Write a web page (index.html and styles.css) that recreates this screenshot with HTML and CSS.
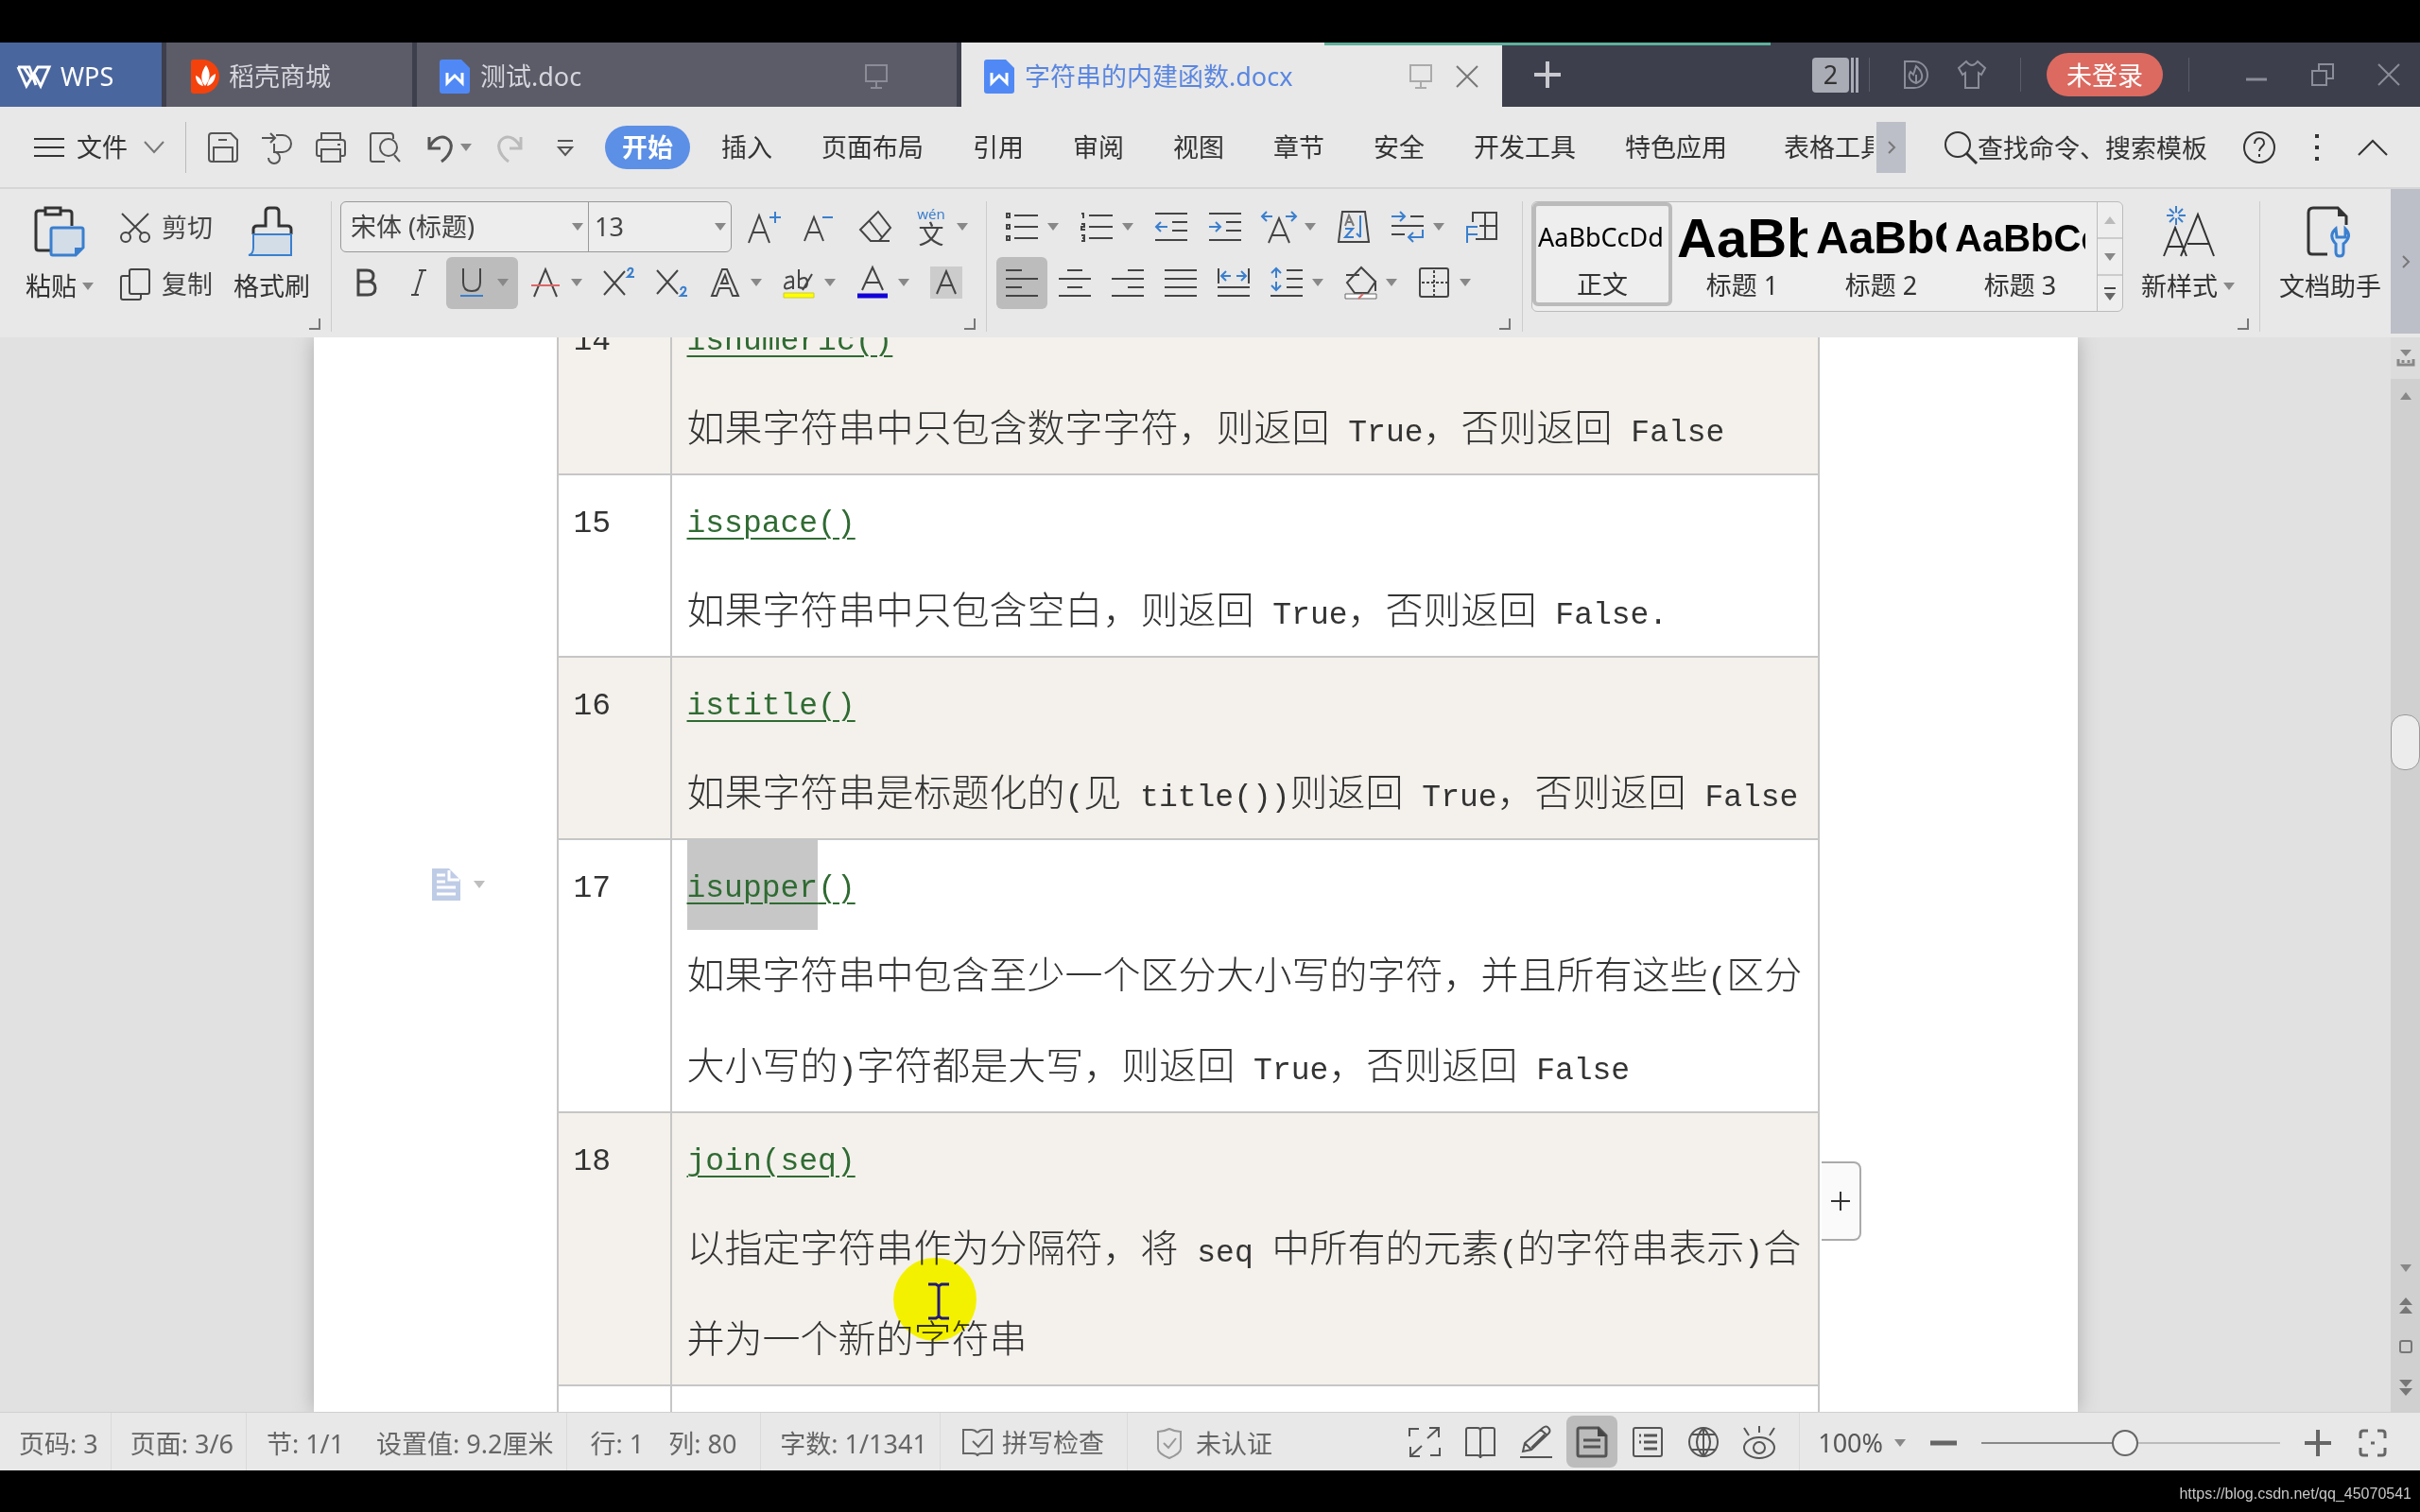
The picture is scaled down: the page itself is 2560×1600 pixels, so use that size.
FILE: index.html
```html
<!DOCTYPE html>
<html lang="zh-CN">
<head>
<meta charset="utf-8">
<title>字符串的内建函数.docx</title>
<link rel="stylesheet" href="styles.css">
</head>
<body>
<svg class="sprite" width="0" height="0" aria-hidden="true">
  <symbol id="caret" viewBox="0 0 12 8"><path d="M0 0h12L6 8z" fill="#888" stroke="none"/></symbol>
  <symbol id="monitor" viewBox="0 0 26 28"><path d="M2 2h22v17H2zM13 19v6M7 26h12"/></symbol>
  <symbol id="close" viewBox="0 0 26 26"><path d="M2 2l22 22M24 2L2 24"/></symbol>
  <symbol id="wdoc" viewBox="0 0 32 36"><path d="M3 0h20l9 9v24q0 3-3 3H3q-3 0-3-3V3q0-3 3-3z" fill="#5089f5" stroke="none"/><path d="M8 14v11l8-8 8 8V14" stroke="#fff" stroke-width="3"/></symbol>
  <symbol id="launcher" viewBox="0 0 12 12"><path d="M11 0v11H0" stroke="#777"/></symbol>
</svg>

<div class="app">
<header class="tabbar">
  <div class="accent"></div>
  <button class="tab home"><svg class="logo" viewBox="0 0 36 24"><path d="M1 2h12l7 19M1 2l9 20 12-20h12l-9 20-7-13M7 2l8 12" stroke-width="3"/></svg>WPS</button>
  <button class="tab shop"><svg class="i32" viewBox="0 0 32 36"><path d="M3 0h9a18 18 0 010 36H3q-3 0-3-3V3q0-3 3-3z" fill="#f4420c" stroke="none"/><path d="M15 28C9 22 11 12 16 6c5 7 5 15-1 22zM13 28c-5-1-8-5-8-11 5 2 7 6 8 11zM17 28c5-1 9-6 9-13-6 3-8 8-9 13z" fill="#fff" stroke="none"/></svg>稻壳商城</button>
  <button class="tab other"><svg class="i32"><use href="#wdoc"/></svg><span>测试.doc</span><svg class="mon"><use href="#monitor"/></svg></button>
  <button class="tab active"><svg class="i32"><use href="#wdoc"/></svg><span>字符串的内建函数.docx</span><svg class="mon"><use href="#monitor"/></svg><svg class="x"><use href="#close"/></svg></button>
  <button class="add" aria-label="新建"><svg viewBox="0 0 28 28"><path d="M14 0v28M0 14h28" stroke-width="4"/></svg></button>
  <div class="wintools">
    <span class="count"><b>2</b></span><i class="vs"></i>
    <button aria-label="稻壳"><svg width="30" height="32" viewBox="0 0 30 32"><path d="M2 2h10a14 14 0 010 28H2zM14 25c-9-3-8-9-6-12l3 3 3-9c5 4 11 14 0 18zM14 25v-9"/></svg></button>
    <button aria-label="皮肤"><svg width="32" height="32" viewBox="0 0 32 32"><path d="M10 2q6 8 12 0l8 7-4 7-3-2v16H9V14l-3 2-4-7z"/></svg></button>
    <i class="vs"></i>
    <button class="login">未登录</button>
    <i class="vs"></i>
    <button aria-label="最小化"><svg width="24" height="26" viewBox="0 0 24 26"><path d="M0 18h22" stroke-width="3"/></svg></button>
    <button aria-label="还原"><svg width="26" height="26" viewBox="0 0 26 26"><path d="M2 9h15v15H2zM9 9V2h15v15h-7"/></svg></button>
    <button aria-label="关闭"><svg width="26" height="26"><use href="#close"/></svg></button>
  </div>
</header>

<nav class="menubar">
  <button class="file"><svg width="32" height="24" viewBox="0 0 32 24"><path d="M0 3h32M0 12h32M0 21h32"/></svg>文件<svg width="22" height="14" viewBox="0 0 22 14"><path d="M1 1l10 11L21 1" stroke="#777"/></svg></button>
  <i class="vs"></i>
  <div class="quick">
    <button aria-label="保存"><svg class="ic" viewBox="0 0 34 34"><path d="M2 5q0-3 3-3h20l7 7v20q0 3-3 3H5q-3 0-3-3zM7 32V17h20v15M12 9h9"/></svg></button>
    <button aria-label="输出"><svg class="ic" viewBox="0 0 34 34"><path d="M1 7h14M10 2l5 5-5 5M16 4h7a9 9 0 010 18h-9V13M14 22a6 6 0 11-6 6"/></svg></button>
    <button aria-label="打印"><svg class="ic" viewBox="0 0 34 34"><path d="M7 9V2h20v7M7 26H4q-2 0-2-2V12q0-3 3-3h24q3 0 3 3v12q0 2-2 2h-3M7 19h20v13H7zM24 14h3"/></svg></button>
    <button aria-label="打印预览"><svg class="ic" viewBox="0 0 34 34"><path d="M17 32H4q-2 0-2-2V4q0-2 2-2h19q3 0 3 3v3M27 25l6 7"/><circle cx="21" cy="17" r="9"/></svg></button>
    <button class="drop" aria-label="撤销"><svg class="ic" viewBox="0 0 34 34"><path d="M5 6v12h12M5 18C9 8 17 4 23 7c9 5 6 17-5 25" stroke-width="3"/></svg><svg class="caret"><use href="#caret"/></svg></button>
    <button class="dim" aria-label="恢复"><svg class="ic" viewBox="0 0 34 34"><path d="M29 6v12H17M29 18C25 8 17 4 11 7c-9 5-6 17 5 25" stroke-width="3"/></svg></button>
    <button aria-label="自定义"><svg width="20" height="22" viewBox="0 0 20 22"><path d="M2 4h16M3 11h14l-7 8z"/></svg></button>
  </div>
  <div class="menus">
    <button class="on">开始</button><button>插入</button><button>页面布局</button><button>引用</button><button>审阅</button><button>视图</button><button>章节</button><button>安全</button><button>开发工具</button><button>特色应用</button><button class="cut">表格工具</button>
  </div>
  <button class="more" aria-label="更多选项卡"><svg width="8" height="14" viewBox="0 0 8 14"><path d="M1 1l6 6-6 6"/></svg></button>
  <label class="search"><svg width="36" height="36" viewBox="0 0 36 36"><circle cx="15" cy="15" r="13"/><path d="M24 24l11 11" stroke-width="3"/></svg><input type="text" placeholder="查找命令、搜索模板" aria-label="查找命令、搜索模板"></label>
  <div class="help">
    <button aria-label="帮助"><svg width="36" height="36" viewBox="0 0 36 36"><circle cx="18" cy="18" r="16"/><path d="M13 14c0-8 11-7 10 0-1 4-5 4-5 8M18 25v3"/></svg></button>
    <button aria-label="菜单"><svg width="6" height="30" viewBox="0 0 6 30"><path d="M1 3h4M1 15h4M1 27h4" stroke-width="4"/></svg></button>
    <button aria-label="折叠"><svg width="32" height="18" viewBox="0 0 32 18"><path d="M1 17L16 2l15 15"/></svg></button>
  </div>
</nav>

<section class="ribbon">
  <div class="group clip">
    <button class="big"><svg width="54" height="54" viewBox="0 0 54 54"><path d="M12 5H5q-3 0-3 3v36q0 3 3 3h14M28 5h9q3 0 3 3v13" stroke="#333" stroke-width="3"/><path d="M12 2h16v7H12z" stroke="#333" stroke-width="3"/><path d="M20 23h30q2 0 2 2v19l-8 8H20q-2 0-2-2V25q0-2 2-2z" fill="#d3dde8" stroke="#3a7fce" stroke-width="3"/><path d="M43 52v-8h9z" fill="#3a7fce" stroke="none"/></svg><span>粘贴<svg class="caret"><use href="#caret"/></svg></span></button>
    <div class="pair">
      <button><svg class="ic" viewBox="0 0 34 34"><circle cx="7" cy="27" r="5"/><circle cx="27" cy="27" r="5"/><path d="M3 2l21 21M31 2L10 23"/></svg>剪切</button>
      <button><svg class="ic" viewBox="0 0 34 34"><path d="M13 1h17q2 0 2 2v22q0 2-2 2H13q-2 0-2-2V3q0-2 2-2zM11 8H4q-2 0-2 2v21q0 2 2 2h17q2 0 2-2v-4"/></svg>复制</button>
    </div>
    <button class="big"><svg width="50" height="54" viewBox="0 0 50 54"><path d="M5 30V25q0-4 4-4h9V6q0-4 4-4h6q4 0 4 4v15h9q4 0 4 4v5" stroke="#333" stroke-width="3"/><path d="M5 30h40v22H0q5-1 5-8z" fill="#d3dde8" stroke="#3a7fce"/></svg><span>格式刷</span></button>
    <svg class="launcher"><use href="#launcher"/></svg>
  </div>

  <div class="group font">
    <div class="row">
      <div class="fontbox">
        <label class="face"><select aria-label="字体"><option>宋体 (标题)</option></select><svg class="caret"><use href="#caret"/></svg></label>
        <label class="size"><select aria-label="字号"><option>13</option></select><svg class="caret"><use href="#caret"/></svg></label>
      </div>
      <button aria-label="增大字号"><svg class="ic" viewBox="0 0 34 34"><path d="M1 34L12 5l11 29M5 23h14"/><path d="M23 7h12M29 1v12" stroke="#3a7fce"/></svg></button>
      <button aria-label="减小字号"><svg class="ic" viewBox="0 0 34 34"><path d="M1 32L11 7l10 25M5 23h13"/><path d="M20 7h11" stroke="#3a7fce"/></svg></button>
      <button aria-label="清除格式"><svg class="ic" viewBox="0 0 34 34"><path d="M20 1l13 17-12 14h-9L1 20zM10 10l14 18M12 32h20"/></svg></button>
      <button class="drop" aria-label="拼音指南"><span class="pinyin"><small>wén</small>文</span><svg class="caret"><use href="#caret"/></svg></button>
    </div>
    <div class="row b">
      <button aria-label="加粗"><svg class="ic" viewBox="0 0 34 34"><path d="M9 4h9q7 0 7 6t-7 6H9zM9 16h10q8 0 8 7t-8 7H9z" stroke-width="3"/></svg></button>
      <button aria-label="倾斜"><svg class="ic" viewBox="0 0 34 34"><path d="M17 4h8M9 30h8M21 4l-8 26"/></svg></button>
      <button class="drop pressed" aria-label="下划线"><svg class="ic" viewBox="0 0 34 34"><path d="M8 2v15q0 9 9 9t9-9V2"/><path d="M5 31h24" stroke="#3a7fce"/></svg><svg class="caret"><use href="#caret"/></svg></button>
      <button class="drop" aria-label="删除线"><svg class="ic" viewBox="0 0 34 34"><path d="M5 32L17 3l12 29"/><path d="M2 20h30" stroke="#d66"/></svg><svg class="caret"><use href="#caret"/></svg></button>
      <button aria-label="上标"><svg class="ic" viewBox="0 0 34 34"><path d="M1 5l22 25M23 5L1 30"/><path d="M26 5q1-4 4-3 4 2-4 9h7" stroke="#3a7fce"/></svg></button>
      <button aria-label="下标"><svg class="ic" viewBox="0 0 34 34"><path d="M1 4l22 25M23 4L1 29"/><path d="M26 25q1-4 4-3 4 2-4 9h7" stroke="#3a7fce"/></svg></button>
      <button class="drop" aria-label="文字效果"><svg class="ic" viewBox="0 0 34 34"><path d="M3 31L14 3h5l12 28h-6l-3-8H11l-3 8zM13 18h7l-3-9z"/></svg><svg class="caret"><use href="#caret"/></svg></button>
      <button class="drop" aria-label="突出显示"><svg class="ic" viewBox="0 0 34 34"><path d="M3 12q8-4 8 2v10M11 16q-9 0-9 5t9 0M17 3v20M17 14q9-5 9 3t-9 5M31 8L21 25"/><path d="M1 28h32v5H1z" fill="#ff0" stroke="#cc3" stroke-width="1"/></svg><svg class="caret"><use href="#caret"/></svg></button>
      <button class="drop" aria-label="字体颜色"><svg class="ic" viewBox="0 0 34 34"><path d="M6 25L17 1l11 24M10 17h14"/><path d="M1 31h32" stroke="#1200d8" stroke-width="5"/></svg><svg class="caret"><use href="#caret"/></svg></button>
      <button aria-label="字符底纹"><svg class="ic" viewBox="0 0 34 34"><path d="M0 0h34v34H0z" fill="#ccc" stroke="none"/><path d="M7 29L17 5l10 24M11 20h12"/></svg></button>
    </div>
    <svg class="launcher"><use href="#launcher"/></svg>
  </div>

  <div class="group para">
    <div class="row">
      <button class="drop" aria-label="项目符号"><svg class="ic" viewBox="0 0 34 34"><path d="M9 5h25M9 17h25M9 29h25"/><path d="M1 3h3v4H1zM1 15h3v4H1zM1 27h3v4H1z"/></svg><svg class="caret"><use href="#caret"/></svg></button>
      <button class="drop" aria-label="编号"><svg class="ic" viewBox="0 0 34 34"><path d="M9 5h25M9 17h25M9 29h25M3 2v6M1 3h2M1 14h3v3H1v3h4M1 26h3v6H1M2 29h2"/></svg><svg class="caret"><use href="#caret"/></svg></button>
      <button aria-label="减少缩进"><svg class="ic" viewBox="0 0 34 34"><path d="M0 3h34M18 12h16M18 21h16M0 31h34"/><path d="M1 17h12M6 12l-5 5 5 5" stroke="#3a7fce"/></svg></button>
      <button aria-label="增加缩进"><svg class="ic" viewBox="0 0 34 34"><path d="M0 3h34M18 12h16M18 21h16M0 31h34"/><path d="M0 17h12M7 12l5 5-5 5" stroke="#3a7fce"/></svg></button>
      <button class="drop" aria-label="字符缩放"><svg class="ic" viewBox="0 0 34 34"><path d="M6 34L17 8l11 26M10 26h14"/><path d="M-1 6h11M4 1L-1 6l5 5M24 6h11M30 1l5 5-5 5" stroke="#3a7fce"/></svg><svg class="caret"><use href="#caret"/></svg></button>
      <button aria-label="排序"><svg class="ic" viewBox="0 0 34 34"><path d="M5 1h24l4 32H1z"/><path d="M8 16l4-11 5 11M10 12h6" stroke="#777"/><path d="M8 19h8l-8 9h9M24 5v23M20 24l4 4" stroke="#3a7fce"/></svg></button>
      <button class="drop" aria-label="换行"><svg class="ic" viewBox="0 0 34 34"><path d="M20 6h14M0 16h34M0 25h14"/><path d="M0 6h14M9 1l5 5-5 5M33 20v8H18M23 23l-5 5 5 5" stroke="#3a7fce"/></svg><svg class="caret"><use href="#caret"/></svg></button>
      <button aria-label="制表位"><svg class="ic" viewBox="0 0 34 34"><path d="M7 12V2h25v28H10M20 2v28M14 16h18"/><path d="M1 34V17h11M1 25h11" stroke="#3a7fce"/></svg></button>
    </div>
    <div class="row b">
      <button class="pressed" aria-label="左对齐"><svg class="ic" viewBox="0 0 34 34"><path d="M0 4h17M0 13h34M0 22h17M0 31h34"/></svg></button>
      <button aria-label="居中"><svg class="ic" viewBox="0 0 34 34"><path d="M9 4h16M0 13h34M9 22h16M0 31h34"/></svg></button>
      <button aria-label="右对齐"><svg class="ic" viewBox="0 0 34 34"><path d="M17 4h17M0 13h34M17 22h17M0 31h34"/></svg></button>
      <button aria-label="两端对齐"><svg class="ic" viewBox="0 0 34 34"><path d="M0 4h34M0 13h34M0 22h34M0 31h34"/></svg></button>
      <button aria-label="分散对齐"><svg class="ic" viewBox="0 0 34 34"><path d="M1 2v16M33 2v16M0 22h34M0 31h34"/><path d="M4 10h10M9 5l-5 5 5 5M20 10h10M25 5l5 5-5 5" stroke="#3a7fce"/></svg></button>
      <button class="drop" aria-label="行距"><svg class="ic" viewBox="0 0 34 34"><path d="M17 4h17M17 13h17M17 22h17M0 31h34"/><path d="M6 2v10M1 7l5-5 5 5M6 16v9M1 20l5 5 5-5" stroke="#3a7fce"/></svg><svg class="caret"><use href="#caret"/></svg></button>
      <button class="drop" aria-label="底纹颜色"><svg class="ic" viewBox="0 0 34 34"><path d="M2 9h14M18 1L3 17l8 11h14l8-12zM33 15v11"/><path d="M1 29h33v5H1z" fill="#fff" stroke="#666" stroke-width="1"/><path d="M15 34l5-5" stroke="#d66"/></svg><svg class="caret"><use href="#caret"/></svg></button>
      <button class="drop" aria-label="边框"><svg class="ic" viewBox="0 0 34 34"><path d="M4 2h26q2 0 2 2v26q0 2-2 2H4q-2 0-2-2V4q0-2 2-2z"/><path d="M17 4v28M4 17h28" stroke-dasharray="3 2"/></svg><svg class="caret"><use href="#caret"/></svg></button>
    </div>
    <svg class="launcher"><use href="#launcher"/></svg>
  </div>

  <div class="group styles">
    <div class="gallery">
      <button class="style picked"><span class="s0">AaBbCcDd</span>正文</button>
      <button class="style"><span class="s1">AaBb</span>标题 1</button>
      <button class="style"><span class="s2">AaBbC</span>标题 2</button>
      <button class="style"><span class="s3">AaBbCc</span>标题 3</button>
      <div class="updown">
        <button aria-label="上一行"><svg class="caret flip"><use href="#caret"/></svg></button>
        <button aria-label="下一行"><svg class="caret"><use href="#caret"/></svg></button>
        <button aria-label="全部样式"><svg width="12" height="14" viewBox="0 0 12 14"><path d="M0 1h12"/><path d="M0 6h12l-6 8z" fill="#666" stroke="none"/></svg></button>
      </div>
    </div>
    <button class="big"><svg width="56" height="54" viewBox="0 0 56 54"><path d="M2 53l12-30 12 30M6 43h16M20 53L38 9l17 44M27 40h23"/><path d="M15 0v20M5 10h20M8 3l14 14M22 3L8 17" stroke="#3a7fce"/><circle cx="15" cy="10" r="3" fill="#e8e8e8" stroke="none"/></svg><span>新样式<svg class="caret"><use href="#caret"/></svg></span></button>
    <svg class="launcher"><use href="#launcher"/></svg>
  </div>

  <div class="group tools">
    <button class="big"><svg width="50" height="54" viewBox="0 0 50 54"><path d="M22 51H6q-4 0-4-4V7q0-5 5-5h26l9 9v9" stroke="#333" stroke-width="3"/><path d="M33 2v9h9z" fill="#333" stroke="none"/><path d="M31 24q-8 7-1 15l1 1v9q0 4 4 4t4-4v-9q10-8 2-16v9h-9z" fill="#d9e6f4" stroke="#3a7fce" stroke-width="3"/></svg><span>文档助手</span></button>
  </div>
  <button class="slide" aria-label="更多工具"><svg width="8" height="14" viewBox="0 0 8 14"><path d="M1 1l6 6-6 6"/></svg></button>
</section>

<main class="workspace">
  <div class="canvas">
    <article class="page">
      <table class="doc">
        <colgroup><col class="num"><col></colgroup>
        <tbody>
        <tr class="alt"><td>14</td><td><p class="fn"><a href="#isnumeric">isnumeric()</a></p><p>如果字符串中只包含数字字符，则返回<span class="latin"> True</span>，否则返回<span class="latin"> False</span></p></td></tr>
        <tr><td>15</td><td><p class="fn"><a href="#isspace">isspace()</a></p><p>如果字符串中只包含空白，则返回<span class="latin"> True</span>，否则返回<span class="latin"> False.</span></p></td></tr>
        <tr class="alt"><td>16</td><td><p class="fn"><a href="#istitle">istitle()</a></p><p>如果字符串是标题化的<span class="latin">(</span>见<span class="latin"> title())</span>则返回<span class="latin"> True</span>，否则返回<span class="latin"> False</span></p></td></tr>
        <tr><td>17</td><td><p class="fn"><a href="#isupper"><mark>isupper</mark>()</a></p><p>如果字符串中包含至少一个区分大小写的字符，并且所有这些<span class="latin">(</span>区分<br>大小写的<span class="latin">)</span>字符都是大写，则返回<span class="latin"> True</span>，否则返回<span class="latin"> False</span></p></td></tr>
        <tr class="alt"><td>18</td><td><p class="fn"><a href="#join">join(seq)</a></p><p>以指定字符串作为分隔符，将<span class="latin"> seq </span>中所有的元素<span class="latin">(</span>的字符串表示<span class="latin">)</span>合<br>并为一个新的字符串</p></td></tr>
        <tr class="last"><td></td><td></td></tr>
        </tbody>
      </table>
      <button class="parabtn" aria-label="段落布局"><svg width="30" height="34" viewBox="0 0 30 34"><path d="M0 0h18l12 12v22H0z" fill="#b9c7e4" stroke="none"/><path d="M5 7h9M5 14h9M5 20h20M5 27h20M18 2v10h11" stroke="#fff" stroke-width="3"/></svg><svg class="caret"><use href="#caret"/></svg></button>
      <button class="addrow" aria-label="添加列"><svg width="20" height="20" viewBox="0 0 20 20"><path d="M10 0v20M0 10h20"/></svg></button>
      <div class="spot"></div>
      <svg class="ibeam" width="22" height="40" viewBox="0 0 22 40"><path d="M0 2h8l3 2 3-2h8M11 4v32M0 38h8l3-2 3 2h8"/></svg>
    </article>
  </div>
  <aside class="vscroll">
    <button class="ruler" aria-label="标尺"><svg width="18" height="18" viewBox="0 0 18 18"><path d="M3 0h12L9 7z" fill="#888" stroke="none"/><path d="M1 10v6h16v-6M6 11v3M12 11v3" stroke="#888" stroke-width="3"/></svg></button>
    <button aria-label="向上"><svg class="caret flip"><use href="#caret"/></svg></button>
    <div class="track"><div class="thumb"></div></div>
    <div class="pager">
      <button aria-label="向下"><svg class="caret"><use href="#caret"/></svg></button>
      <button aria-label="上一页"><svg width="14" height="18" viewBox="0 0 14 18"><path d="M0 8h14L7 0zM0 17h14L7 9z" fill="#777" stroke="none"/></svg></button>
      <button aria-label="选择浏览对象"><svg width="14" height="14" viewBox="0 0 14 14"><rect x="1" y="1" width="12" height="12" rx="2" stroke="#777"/></svg></button>
      <button aria-label="下一页"><svg width="14" height="18" viewBox="0 0 14 18"><path d="M0 1h14L7 9zM0 10h14l-7 8z" fill="#777" stroke="none"/></svg></button>
    </div>
  </aside>
</main>

<footer class="status">
  <span class="cell">页码: 3</span><span class="cell">页面: 3/6</span>
  <span class="cell sect">节: 1/1<span>设置值: 9.2厘米</span></span>
  <span class="cell wide">行: 1<span>列: 80</span></span>
  <span class="cell">字数: 1/1341</span>
  <button class="cell spell"><svg class="ic" viewBox="0 0 34 34"><path d="M17 6q-3-3-6-3H2v25h10q5 0 5 3 0-3 5-3h10V3h-9q-3 0-6 3M12 15l6 6 10-12"/></svg>拼写检查</button>
  <button class="cell cert"><svg width="28" height="34" viewBox="0 0 28 34"><path d="M14 1q6 3 12 3v18q0 5-12 10Q2 27 2 22V4q6 0 12-3zM8 16l5 5 8-10" stroke="#999"/></svg>未认证</button>
  <div class="views">
    <button aria-label="全屏显示"><svg class="ic" viewBox="0 0 34 34"><path d="M1 11V3h10M33 23v8H23M20 13L32 2M22 2h10v10M14 21L2 32M2 22v10h10"/></svg></button>
    <button aria-label="阅读版式"><svg class="ic" viewBox="0 0 34 34"><path d="M4 2h10q3 0 3 3 0-3 3-3h10q2 0 2 2v27H20q-3 0-3 3 0-3-3-3H2V4q0-2 2-2zM17 5v28"/></svg></button>
    <button aria-label="写作模式"><svg class="ic" viewBox="0 0 34 34"><path d="M3 27l2-9L24 2q4-3 6 0 3 3 0 6L12 25zM5 18l7 7M22 4l7 6M26 9L12 23M0 33h34"/></svg></button>
    <button class="pressed" aria-label="页面视图"><svg class="ic" viewBox="0 0 34 34"><path d="M4 2h20l8 8v20q0 2-2 2H4q-2 0-2-2V4q0-2 2-2zM8 15h18M8 22h18" stroke-width="3"/><path d="M23 1v10h10z" fill="#444" stroke="none"/></svg></button>
    <button aria-label="大纲"><svg class="ic" viewBox="0 0 34 34"><path d="M4 2h26q2 0 2 2v26q0 2-2 2H4q-2 0-2-2V4q0-2 2-2z"/><path d="M8 10h2M13 10h14M8 17h2M13 17h14M13 24h14" stroke-width="3"/></svg></button>
    <button aria-label="Web 版式"><svg class="ic" viewBox="0 0 34 34"><circle cx="17" cy="17" r="15"/><path d="M4 9h26M4 25h26M17 2v30M17 2Q3 17 17 32M17 2q14 15 0 30"/></svg></button>
    <button aria-label="护眼模式"><svg class="ic" viewBox="0 0 34 34"><path d="M17 0v7M1 2l5 8M33 2l-5 8"/><ellipse cx="17" cy="23" rx="16" ry="11"/><circle cx="17" cy="23" r="6"/></svg></button>
  </div>
  <div class="zoom">
    <button class="pct">100%<svg class="caret"><use href="#caret"/></svg></button>
    <button aria-label="缩小"><svg width="28" height="28" viewBox="0 0 28 28"><path d="M0 14h28" stroke-width="5"/></svg></button>
    <input type="range" min="0" max="100" value="48" aria-label="缩放">
    <button aria-label="放大"><svg width="28" height="28" viewBox="0 0 28 28"><path d="M0 14h28M14 0v28" stroke-width="4"/></svg></button>
    <button aria-label="最佳缩放"><svg width="28" height="28" viewBox="0 0 28 28"><path d="M1 9V4q0-3 3-3h5M19 1h5q3 0 3 3v5M27 19v5q0 3-3 3h-5M9 27H4q-3 0-3-3v-5M12 14h4" stroke-width="3"/></svg></button>
  </div>
</footer>
</div>
<p class="credit">https://blog.csdn.net/qq_45070541</p>
</body>
</html>
```
FILE: styles.css
```css
* { box-sizing: border-box; }
body {
  margin: 0;
  height: 100vh;
  padding-top: 45px;
  display: flex;
  flex-direction: column;
  background: #000;
  color: #333;
  font: 27px/36px "Noto Sans", "Noto Sans CJK SC", sans-serif;
  overflow: hidden;
}
button, input, select { font: inherit; color: inherit; background: none; border: 0; padding: 0; margin: 0; }
button { display: flex; align-items: center; justify-content: center; white-space: nowrap; flex: none; }
svg { fill: none; stroke: currentColor; stroke-width: 2; flex: none; display: block; overflow: visible; }
.sprite { position: absolute; }
p { margin: 0; }
.ic { width: 34px; height: 34px; }
.i32 { width: 32px; height: 36px; }
.caret { width: 12px; height: 8px; }
.flip { transform: rotate(180deg); }
.drop { gap: 10px; }
.vs { width: 1px; flex: none; background: #bbb; }

.app { flex: 1; min-height: 0; display: flex; flex-direction: column; background: #e8e8e8; }

/* document tabs and window controls */
.tabbar { position: relative; display: flex; height: 68px; background: #3d3f4c; color: #d5d5dc; flex: none; }
.accent { position: absolute; top: 0; left: 1401px; width: 472px; height: 3px; background: #5fb09c; }
.tab { background: #5c5c69; margin-right: 5px; justify-content: flex-start; padding: 4px 0 0 24px; gap: 11px; }
.home { width: 171px; background: #4a669e; color: #fff; padding-left: 18px; gap: 10px; }
.logo { width: 36px; height: 24px; }
.shop { width: 260px; gap: 8px; padding-left: 26px; }
.other { width: 571px; padding-right: 72px; }
.active { width: 572px; background: #e8e8e8; color: #5a86e0; margin: 0; padding-right: 24px; }
.other span, .active span { flex: 1; text-align: left; }
.mon { width: 26px; height: 28px; color: #8c8c97; }
.active .mon { color: #aaa; }
.x { width: 26px; height: 26px; color: #777; margin-left: 12px; }
.add { width: 96px; color: #c9c9d0; }
.add svg { width: 28px; height: 28px; }
.wintools { margin-left: auto; padding-right: 20px; display: flex; align-items: center; gap: 27px; color: #8b8d98; }
.wintools .vs { height: 36px; background: #5a5c69; }
.wintools button + .vs { margin-left: 8px; }
.count { width: 49px; height: 37px; border-right: 8px double #a9abb5; margin-right: -16px; }
.count + .vs + button { margin-left: 8px; }
.count b { display: block; width: 39px; height: 37px; border-radius: 4px; background: #a9abb5; color: #333; font-weight: 400; text-align: center; }
.login { width: 123px; height: 46px; border-radius: 23px; background: #dc6a60; color: #fff; padding-top: 2px; }
.wintools .login + .vs { margin: 0 33px 0 0; }
.wintools button:nth-last-child(-n+2) { margin-left: 17px; }

/* main menu */
.menubar { display: flex; align-items: center; height: 87px; padding: 1px 34px 0 36px; border-bottom: 2px solid #d6d6d6; flex: none; }
.file { gap: 13px; margin-right: 22px; }
.file svg:last-child { margin-left: 4px; }
.menubar > .vs { height: 54px; }
.quick { display: flex; align-items: center; gap: 23px; margin-left: 22px; color: #555; }
.quick .drop { gap: 4px; margin-left: 2px; }
.quick .dim { color: #bbb; margin-right: 9px; }
.menus { display: flex; align-items: center; gap: 52px; margin: 0 3px 0 32px; flex: 1; min-width: 0; overflow: hidden; }
.menus .on { height: 46px; border-radius: 23px; padding: 0 18px; margin-right: -19px; background: #5c8fe6; color: #fff; font-weight: 700; }
.menus .cut { margin-left: 8px; }
.more { width: 31px; height: 54px; background: #bcbec8; color: #777; }
.search { display: flex; align-items: center; margin-left: 40px; }
.search input { width: 280px; height: 40px; }
.search input::placeholder { color: #333; opacity: 1; }
.help { display: flex; align-items: center; gap: 40px; }

/* ribbon */
.ribbon { display: flex; height: 157px; padding-top: 13px; flex: none; color: #444; }
.group { position: relative; border-right: 1px solid #ccc; height: 138px; margin-bottom: 6px; display: flex; flex: none; }
.launcher { position: absolute; right: 11px; bottom: 2px; width: 12px; height: 12px; }
.big { flex-direction: column; justify-content: flex-start; align-items: center; gap: 13px; padding-top: 5px; color: #333; }
.big span { display: flex; align-items: center; gap: 6px; line-height: 36px; }
.clip { width: 351px; padding-left: 27px; }
.pair { display: flex; flex-direction: column; margin-left: 27px; margin-right: 22px; padding-top: 10px; gap: 24px; }
.pair button { gap: 11px; color: #444; }
.font, .para { flex-direction: column; }
.row { display: flex; align-items: center; height: 54px; }
.row.b { gap: 22px; height: 60px; padding-top: 4px; }
.font { width: 693px; padding-left: 9px; }
.font .row { gap: 25px; }
.font .row.b { padding-left: 10px; gap: 22px; }
.fontbox { display: flex; width: 414px; height: 54px; border: 1px solid #999; border-radius: 6px; margin-right: -8px; background: #ededed; }
.fontbox label { position: relative; display: flex; align-items: center; }
.fontbox select { appearance: none; width: 100%; height: 100%; padding-left: 10px; }
.fontbox .caret { position: absolute; right: 5px; }
.face { width: 262px; border-right: 1px solid #999; }
.size { flex: 1; }
.fontbox .size select { padding-left: 6px; }
.pinyin { width: 34px; display: flex; flex-direction: column; align-items: center; font-size: 27px; line-height: 28px; }
.pinyin small { font-size: 15px; line-height: 16px; color: #3a7fce; }
.row .pressed { height: 55px; border-radius: 6px; background: #bcbcbc; padding: 0 10px; margin: 0 -10px; }
.para { width: 567px; padding-left: 20px; }
.para .row { gap: 23px; }
.para .row.b { gap: 22px; }
.para .launcher { right: 12px; }
.styles { width: 780px; padding-left: 9px; gap: 19px; }
.gallery { display: flex; width: 626px; height: 117px; border: 1px solid #bbb; border-radius: 6px; background: #eee; }
.style { width: 138px; height: 110px; margin-left: 9px; flex-direction: column; justify-content: flex-end; color: #333; line-height: 36px; padding-bottom: 4px; }
.style span { width: 138px; height: 64px; line-height: 64px; overflow: hidden; text-align: left; color: #000; font-family: "Liberation Sans", sans-serif; font-weight: 700; }
.picked { width: 148px; margin: 0 -4px 0 0; border: 4px solid #bbb; border-radius: 6px; padding-bottom: 1px; }
.style .s0 { font: 27px/60px "Noto Sans", sans-serif; width: 136px; height: 62px; }
.style .s1 { font-size: 58px; }
.style .s2 { font-size: 48px; }
.style .s3 { font-size: 40px; }
.updown { display: flex; flex-direction: column; flex: 1; margin-left: 12px; border-left: 1px solid #bbb; }
.updown button { flex: 1; }
.updown button + button { border-top: 2px solid #ccc; }
.updown button:first-child { opacity: 0.5; }
.tools { padding: 0 9px 0 20px; border: 0; flex: 1; }
.slide { width: 31px; height: 153px; margin-top: -13px; background: #bcbec8; color: #777; }

/* page */
.workspace { flex: 1; min-height: 0; display: flex; background: #e1e1e1; border-bottom: 1px solid #d0d0d0; }
.canvas { flex: 1; min-width: 0; overflow: hidden; display: flex; justify-content: center; }
.page { position: relative; width: 1866px; max-width: 100%; padding: 0 273px 0 257px; background: #fff; box-shadow: 0 0 20px #aaa; }
.doc { width: 100%; margin-top: -49px; border-collapse: collapse; table-layout: fixed; font: 40px/96px "Noto Sans CJK SC", sans-serif; font-weight: 300; color: #333; }
.num { width: 120px; }
.doc td { border: 2px solid #c6c6c6; padding: 0 0 0 16px; vertical-align: top; white-space: nowrap; }
.doc td:first-child { font: 33px/104px "Liberation Mono", monospace; }
.doc p { margin-top: -3px; padding-bottom: 3px; }
.alt td { background: #f4f1ec; }
.last td { height: 193px; }
.latin { font: 33px/1 "Liberation Mono", monospace; white-space: pre; }
.doc .fn { font: 33px/104px "Liberation Mono", monospace; height: 95px; margin: 0; padding: 0; }
.fn a { color: #2f6b32; text-decoration: underline; text-decoration-thickness: 2px; text-underline-offset: 6px; }
mark { background: #c7c7c7; color: inherit; padding: 33px 0 25px; }
.parabtn { position: absolute; left: 125px; top: 562px; gap: 14px; opacity: 0.9; }
.parabtn .caret { opacity: 0.6; }
.addrow { position: absolute; left: 1595px; top: 872px; width: 42px; height: 84px; border: 2px solid #aaa; border-left: 0; border-radius: 0 8px 8px 0; background: #fafafa; }
.spot { position: absolute; left: 613px; top: 974px; width: 88px; height: 88px; border-radius: 50%; background: #ff0; mix-blend-mode: multiply; }
.ibeam { position: absolute; left: 650px; top: 1000px; stroke: #221a7a; stroke-width: 3; }
.vscroll { width: 31px; background: #d0d0d0; display: flex; flex-direction: column; align-items: center; }
.ruler { width: 31px; height: 44px; background: #dcdcdc; margin-bottom: 14px; }
.track { flex: 1; width: 31px; padding-top: 333px; }
.thumb { height: 59px; border: 1px solid #999; border-radius: 14px; background: #ececec; }
.pager { display: flex; flex-direction: column; align-items: center; gap: 27px; padding-bottom: 17px; }

/* status bar */
.status { display: flex; align-items: center; height: 61px; flex: none; color: #666; padding-right: 36px; }
.cell { display: flex; align-items: center; height: 61px; padding: 4px 13px 0 20px; border-right: 1px solid #dadada; white-space: nowrap; }
.cell span { margin-left: 34px; }
.wide { padding: 4px 25px 0; }
.wide span { margin-left: 26px; }
.spell { gap: 9px; padding: 2px 24px 0 22px; color: #666; }
.sect { padding-left: 21px; }
.cert { gap: 14px; padding: 4px 0 0 30px; border: 0; }
.views { display: flex; align-items: center; gap: 25px; margin-left: auto; padding-right: 25px; border-right: 1px solid #dadada; height: 61px; color: #555; }
.views .pressed { height: 55px; padding: 0 10px; margin: 0 -10px; background: #bcbcbc; border-radius: 8px; }
.zoom { display: flex; align-items: center; gap: 26px; padding: 2px 0 0 19px; color: #666; }
.pct { gap: 12px; color: #555; }
.zoom input { appearance: none; width: 316px; height: 28px; background: linear-gradient(90deg, #888 48%, #bbb 48%) center / 100% 2px no-repeat; }
.zoom input::-webkit-slider-thumb { appearance: none; width: 28px; height: 28px; border: 2px solid #666; border-radius: 50%; background: #f0f0f0; }
.zoom button:last-child { margin-left: 4px; }
.credit { height: 44px; padding: 5px 9px 0; text-align: right; font: 16px/40px "Liberation Sans", sans-serif; color: #c8c8c8; flex: none; }
```
